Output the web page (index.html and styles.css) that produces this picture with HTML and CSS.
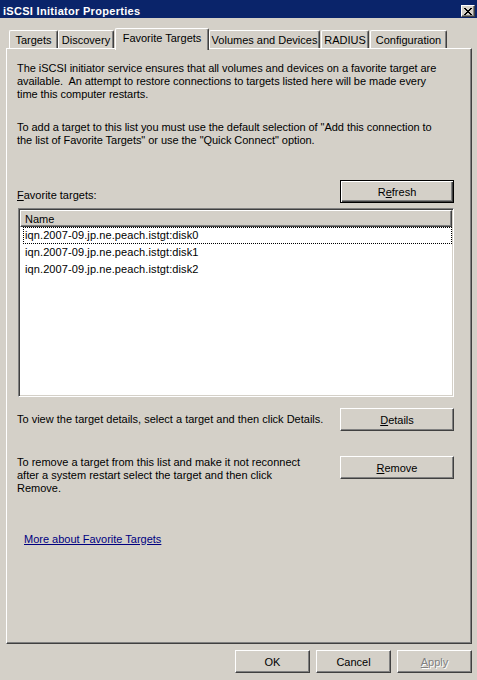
FILE: index.html
```html
<!DOCTYPE html>
<html>
<head>
<meta charset="utf-8">
<title>iSCSI Initiator Properties</title>
<link rel="stylesheet" href="styles.css">
</head>
<body>
<div class="window">
  <div class="titlebar">
    <span class="title">iSCSI Initiator Properties</span>
    <span class="close">
      <svg width="8" height="7" viewBox="0 0 8 7" shape-rendering="crispEdges"><path d="M0 0h2v1h-2zM6 0h2v1h-2zM1 1h2v1h-2zM5 1h2v1h-2zM2 2h4v1h-4zM3 3h2v1h-2zM2 4h4v1h-4zM1 5h2v1h-2zM5 5h2v1h-2zM0 6h2v1h-2zM6 6h2v1h-2z" fill="#000"/></svg>
    </span>
  </div>
  <div class="tabs">
    <div class="tab tab-targets">Targets</div>
    <div class="tab tab-discovery">Discovery</div>
    <div class="tab tab-active">Favorite Targets</div>
    <div class="tab tab-volumes">Volumes and Devices</div>
    <div class="tab tab-radius">RADIUS</div>
    <div class="tab tab-config">Configuration</div>
  </div>
  <div class="panel">
    <p class="para">The iSCSI initiator service ensures that all volumes and devices on a favorite target are<br>available.&nbsp; An attempt to restore connections to targets listed here will be made every<br>time this computer restarts.</p>
    <p class="para para-2">To add a target to this list you must use the default selection of "Add this connection to<br>the list of Favorite Targets" or use the "Quick Connect" option.</p>
    <div class="row row-fav">
      <span class="label"><span class="u">F</span>avorite targets:</span>
      <button class="btn btn-wide btn-default">R<span class="u">e</span>fresh</button>
    </div>
    <div class="list">
      <div class="list-header"><span class="col">Name</span></div>
      <div class="list-row focused">iqn.2007-09.jp.ne.peach.istgt:disk0</div>
      <div class="list-row">iqn.2007-09.jp.ne.peach.istgt:disk1</div>
      <div class="list-row">iqn.2007-09.jp.ne.peach.istgt:disk2</div>
    </div>
    <div class="row row-details">
      <span class="text">To view the target details, select a target and then click Details.</span>
      <button class="btn btn-wide"><span class="u">D</span>etails</button>
    </div>
    <div class="row row-remove">
      <span class="text">To remove a target from this list and make it not reconnect<br>after a system restart select the target and then click<br>Remove.</span>
      <button class="btn btn-wide"><span class="u">R</span>emove</button>
    </div>
    <a class="link" href="#">More about Favorite Targets</a>
  </div>
  <div class="footer">
    <button class="btn btn-foot">OK</button>
    <button class="btn btn-foot">Cancel</button>
    <button class="btn btn-foot btn-disabled"><span class="u">A</span>pply</button>
  </div>
</div>
</body>
</html>
```
FILE: styles.css
```css
* { box-sizing: border-box; }
html, body { margin: 0; padding: 0; }
body {
  width: 477px;
  height: 680px;
  overflow: hidden;
  background: #d4d0c8;
  font-family: "Liberation Sans", Arial, sans-serif;
  font-size: 11px;
  color: #000;
}
.window { display: flex; flex-direction: column; height: 680px; }

.titlebar {
  height: 18px;
  background: #0a246a;
  display: flex;
  align-items: flex-end;
  justify-content: space-between;
  padding: 0 2px 1px 3px;
}
.title { color: #fff; font-weight: bold; font-size: 11px; line-height: 12px; letter-spacing: 0.3px; }
.close {
  width: 14px;
  height: 12px;
  background: #d4d0c8;
  border: 1px solid;
  border-color: #fff #404040 #404040 #fff;
  box-shadow: inset -1px -1px #808080;
  display: flex;
  align-items: center;
  justify-content: center;
}

.tabs {
  display: flex;
  align-items: flex-end;
  height: 20px;
  margin-top: 10px;
  padding-left: 9px;
}
.tab {
  height: 18px;
  background: #d4d0c8;
  border-top: 1px solid #fff;
  border-left: 1px solid #fff;
  border-right: 1px solid #404040;
  box-shadow: inset -1px 0 #808080;
  border-top-left-radius: 2px;
  border-top-right-radius: 2px;
  display: flex;
  align-items: center;
  justify-content: center;
  padding-top: 1px;
  white-space: nowrap;
}
.tab-targets { width: 49px; }
.tab-discovery { width: 56px; }
.tab-active {
  width: 94px;
  height: 22px;
  margin-left: 1px;
  margin-bottom: -2px;
  padding-top: 0;
  padding-bottom: 3px;
  position: relative;
  z-index: 1;
}
.tab-volumes { width: 111px; }
.tab-radius { width: 48px; margin-left: 1px; }
.tab-config { width: 77px; margin-left: 1px; }

.panel {
  margin-left: 6px;
  width: 466px;
  height: 596px;
  border: 1px solid;
  border-color: #fff #404040 #404040 #fff;
  box-shadow: inset -1px -1px #808080;
  padding: 13px 17px 0 10px;
  display: flex;
  flex-direction: column;
}
.para { margin: 0; line-height: 13px; white-space: nowrap; letter-spacing: -0.05px; }
.para-2 { margin-top: 20px; }

.row { display: flex; justify-content: space-between; }
.row-fav { margin-top: 33px; height: 23px; }
.label { align-self: flex-end; line-height: 13px; margin-bottom: 1px; }
.row-details { margin-top: 11px; align-items: center; }
.row-remove { margin-top: 25px; align-items: flex-start; }
.text { line-height: 13px; white-space: nowrap; }

.u { text-decoration: underline; }

.btn {
  font-family: inherit;
  font-size: 11px;
  color: #000;
  background: #d4d0c8;
  height: 23px;
  padding: 0;
  margin: 0;
  border: 1px solid;
  border-color: #fff #404040 #404040 #fff;
  box-shadow: inset -1px -1px #808080;
  border-radius: 0;
}
.btn-wide { width: 114px; }
.btn-default {
  border-color: #000;
  box-shadow: inset 1px 1px #fff, inset -1px -1px #404040, inset -2px -2px #808080;
}
.btn-foot { width: 75px; }
.btn-disabled { color: #808080; text-shadow: 1px 1px 0 #fff; }

.list {
  margin-top: 5px;
  margin-left: 1px;
  height: 189px;
  background: #fff;
  border: 1px solid;
  border-color: #808080 #fff #fff #808080;
  box-shadow: inset 1px 1px #404040, inset -1px -1px #d4d0c8;
  padding: 1px;
}
.list-header {
  height: 17px;
  background: #d4d0c8;
  border: 1px solid;
  border-color: #fff #404040 #404040 #fff;
  box-shadow: inset -1px -1px #808080;
  display: flex;
  align-items: center;
  padding-left: 4px;
}
.list-row {
  height: 17px;
  margin-left: 3px;
  padding-left: 1px;
  line-height: 15px;
  border: 1px solid transparent;
  white-space: nowrap;
  letter-spacing: 0.1px;
}
.list-row.focused { border: 1px dotted #000; }

.link {
  margin-top: 38px;
  margin-left: 7px;
  align-self: flex-start;
  line-height: 13px;
  color: #000080;
  text-decoration: underline;
}

.footer {
  display: flex;
  justify-content: flex-end;
  gap: 6px;
  margin-top: 6px;
  padding-right: 5px;
}
```
